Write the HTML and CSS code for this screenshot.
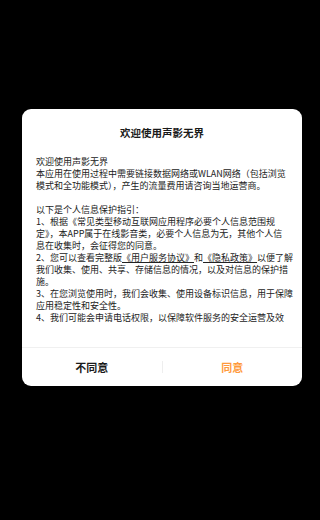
FILE: index.html
```html
<!DOCTYPE html>
<html lang="zh-CN">
<head>
    <meta charset="UTF-8">
    <meta name="viewport" content="width=device-width, initial-scale=1.0">
    <title>欢迎使用声影无界</title>
    <link rel="stylesheet" href="styles.css">
</head>
<body>
    <div class="overlay">
        <div class="dialog">
            <h2 class="dialog-title">欢迎使用声影无界</h2>

            <div class="dialog-content">
                <p>欢迎使用声影无界<br>
                本应用在使用过程中需要链接数据网络或WLAN网络（包括浏览<br>
                模式和全功能模式），产生的流量费用请咨询当地运营商。</p>

                <p>以下是个人信息保护指引：<br>
                1、根据《常见类型移动互联网应用程序必要个人信息范围规<br>
                定》，本APP属于在线影音类，必要个人信息为无，其他个人信<br>
                息在收集时，会征得您的同意。<br>
                2、您可以查看完整版<a href="#">《用户服务协议》</a>和<a href="#">《隐私政策》</a>以便了解<br>
                我们收集、使用、共享、存储信息的情况，以及对信息的保护措<br>
                施。<br>
                3、在您浏览使用时，我们会收集、使用设备标识信息，用于保障<br>
                应用稳定性和安全性。<br>
                4、我们可能会申请电话权限，以保障软件服务的安全运营及效</p>
            </div>

            <div class="dialog-buttons">
                <button class="btn btn-cancel">不同意</button>
                <span class="btn-divider"></span>
                <button class="btn btn-ok">同意</button>
            </div>
        </div>
    </div>
</body>
</html>
```

FILE: styles.css
```css
body {
    margin: 0;
    background-color: #000;
    font-family: "Noto Sans CJK SC", sans-serif;
}
.overlay {
    height: 520px;
    padding: 109px 0 0 22px;
    box-sizing: border-box;
}
.dialog {
    width: 280px;
    background: #fff;
    border-radius: 9px;
    overflow: hidden;
}
.dialog-title {
    margin: 0;
    padding: 17px 0 0;
    text-align: center;
    font-size: 10.5px;
    line-height: 14px;
    font-weight: bold;
    color: #1a1a1a;
}
.dialog-content {
    margin: 16px 0 0;
    padding: 0 0 0 14px;
    height: 168px;
    overflow: hidden;
    font-size: 9px;
    line-height: 12px;
    color: #222;
    white-space: nowrap;
}
.dialog-content p {
    margin: 0 0 12px;
}
.dialog-content a {
    color: #222;
    text-decoration: underline;
}
.dialog-buttons {
    display: flex;
    align-items: center;
    margin-top: 23px;
    border-top: 1px solid #f0f0f0;
    height: 38px;
}
.btn {
    flex: 1;
    height: 100%;
    padding: 0;
    border: none;
    background: none;
    font-family: inherit;
    font-size: 11px;
    font-weight: bold;
    cursor: pointer;
}
.btn-cancel {
    color: #1a1a1a;
}
.btn-ok {
    color: #ff9a3c;
}
.btn-divider {
    width: 1px;
    height: 12px;
    background: #eee;
}
```
